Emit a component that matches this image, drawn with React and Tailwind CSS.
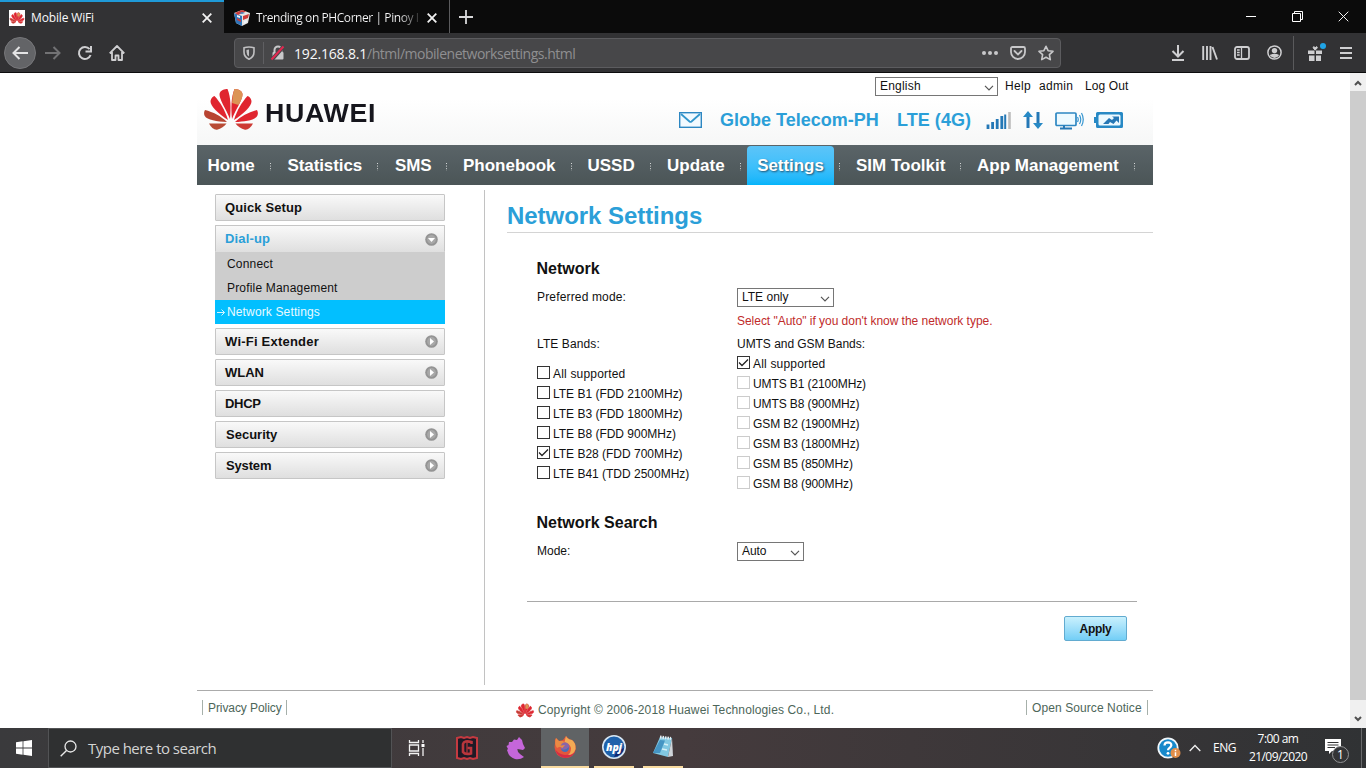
import React from "react";

const ARIAL = "font-['Liberation_Sans',Arial,sans-serif]";
const SEGOE = "font-['Open_Sans','Noto_Sans',sans-serif]";

function Svg({ w, h, children, className = "" }) {
  return (
    <svg width={w} height={h} viewBox={`0 0 ${w} ${h}`} fill="none" className={`block shrink-0 ${className}`}>
      {children}
    </svg>
  );
}

function Petals({ w, h, bold, className = "" }) {
  return (
    <svg width={w} height={h} viewBox="0 0 54 41" className={`block shrink-0 overflow-visible ${className}`}>
      <g fill="#e0252f" stroke={bold ? "#dc2f36" : "none"} strokeWidth={bold ? 2.5 : 0}>
        <path d="M26 30C22 20 15 10 15.500 5C16 1 21 0 23.500 0C27 8 27 20 26 30Z" />
        <path d="M24 31C15 25 6 17 6.500 12C7 9 9 7.500 10.500 7C16 13 21 21 24 31Z" />
        <path d="M28 30C32 20 39 10 38.500 5C38 1 33 0 30.500 0C27 8 27 20 28 30Z" />
        <path d="M30 31C39 25 48 17 47.500 12C47 9 45 7.500 43.500 7C38 13 33 21 30 31Z" />
        <path d="M23 33C13 32.500 3 31 .8 27C-.8 24 .8 21.500 1 21C9 23 17 27 23 33Z" fill="#b84431" />
        <path d="M31 33C41 32.500 51 31 53.200 27C54.800 24 53.200 21.500 53 21C45 23 37 27 31 33Z" />
        <path d="M22.500 34.500H5C7 38.500 10 41 13 40.700C17 40 20.500 37 22.500 34.500Z" fill="#b84b35" />
        <path d="M31.500 34.500H49C47 38.500 44 41 41 40.700C37 40 33.500 37 31.500 34.500Z" fill="#cd3b35" />
        <path d="M28.100 14C28.500 8 29 4 30.500 0C33 0 38 1 38.500 5C38.700 8 37 12 34.500 16Z" fill="#dc9455" stroke="none" />
      </g>
    </svg>
  );
}

function CloseX({ size = 10, sw = 1.8, color = "#f2f2f2" }) {
  return (
    <Svg w={size} h={size}>
      <path d={`M.7 .7L${size - 0.7} ${size - 0.7}M${size - 0.7} .7L.7 ${size - 0.7}`} stroke={color} strokeWidth={sw} />
    </Svg>
  );
}

function Tabs() {
  return (
    <div className="flex h-[33px] bg-[#0b0b0b] text-[12px] text-[#f9f9fa]">
      <div className="flex w-[224px] items-center border-t-2 border-[#1f9ad8] bg-[#323234] pl-[9px] pr-[12px]">
        <div className="flex size-4 items-center justify-center bg-white">
          <Petals w={14} h={12} bold />
        </div>
        <span className="ml-[6px] flex-1 tracking-[-0.15px]">Mobile WiFi</span>
        <CloseX />
      </div>
      <div className="flex w-[226px] items-center border-r border-[#5b5b5d] pl-[10px] pr-[12px] pt-[2px]">
        <Svg w={16} h={16}>
          <path d="M8 0L16 3L14 13L8 16L2 13L0 3Z" fill="#e8e4e2" />
          <path d="M0 3L8 6V16L2 13Z" fill="#2e75ba" />
          <path d="M1 3L8 0L12 1.500L4 5ZM9 6L15 4L14 8L9 10ZM3 8L7 10V12L3 10Z" fill="#cf3a38" />
          <path d="M3 5L6 6V8L3 7ZM10 11L13 10V12L10 14Z" fill="#eef4fa" />
          <path d="M8 2L11 3L8 4L5 3Z" fill="#4a87c5" />
        </Svg>
        <span className="ml-[6px] whitespace-nowrap bg-gradient-to-r from-[#f9f9fa] from-88% to-[#333] bg-clip-text tracking-[-0.43px] text-transparent">
          Trending on PHCorner | Pinoy I
        </span>
        <span className="ml-auto"><CloseX /></span>
      </div>
      <div className="ml-[9px] flex items-center">
        <Svg w={14} h={14}><path d="M7 0V14M0 7H14" stroke="#d8d8da" strokeWidth="1.800" /></Svg>
      </div>
      <div className="ml-auto flex items-center">
        <div className="flex w-[46px] justify-center"><Svg w={10} h={1}><path d="M0 .5H10" stroke="#fff" /></Svg></div>
        <div className="flex w-[46px] justify-center">
          <Svg w={11} h={11}><path d="M.5 2.500H8.500V10.500H.5ZM2.500 2.500V.5H10.500V8.500H8.500" stroke="#fff" /></Svg>
        </div>
        <div className="flex w-[46px] justify-center"><CloseX size={11} sw={1} /></div>
      </div>
    </div>
  );
}

function Cell({ w, children }) {
  const widths = { 32: "w-[32px]", 28: "w-[28px]" };
  return <div className={`flex ${widths[w]} shrink-0 items-center justify-center`}>{children}</div>;
}

function Toolbar() {
  return (
    <div className="flex h-[40px] items-center border-b border-[#0c0c0d] bg-[#323234]">
      <div className="flex w-[234px] items-center pl-1">
        <div className="mr-px flex size-8 items-center justify-center rounded-full border border-[#77777a] bg-[#636467]">
          <Svg w={16} h={14}><path d="M16 7H1.500M7.500 1L1.500 7L7.500 13" stroke="#e4e4e5" strokeWidth="2" /></Svg>
        </div>
        <Cell w={32}><Svg w={16} h={14}><path d="M0 7H14.500M8.500 1L14.500 7L8.500 13" stroke="#727274" strokeWidth="2" /></Svg></Cell>
        <Cell w={32}>
          <Svg w={16} h={16}>
            <path d="M12.600 4.200A6 6 0 1 0 13.600 10" stroke="#cfcfd1" strokeWidth="2" />
            <path d="M14 1V6.500H8.500" stroke="#cfcfd1" strokeWidth="2" />
          </Svg>
        </Cell>
        <Cell w={32}>
          <Svg w={16} h={16}>
            <path d="M.7 8.300L8 1L15.300 8.300M3 7V15H6.500V10.500H9.500V15H13V7" stroke="#cfcfd1" strokeWidth="1.800" strokeLinejoin="round" />
          </Svg>
        </Cell>
      </div>
      <div className="flex h-[30px] w-[827px] items-center rounded-sm border border-[#5c5c5f] bg-[#474749] pl-[8px]">
        <Svg w={12} h={14}>
          <path d="M1 1.800Q6 .2 11 1.800V6Q11 11 6 13.200Q1 11 1 6Z" stroke="#c0c0c2" strokeWidth="1.600" />
          <path d="M6 3.500V10.500Q3.500 9 3.500 6V4Z" fill="#c0c0c2" />
        </Svg>
        <div className="ml-[8px] h-[22px] w-px bg-[#5f5f62]" />
        <Svg w={16} h={16} className="ml-[6px]">
          <path d="M4.500 7V5A3.500 3.500 0 0 1 11.500 5V7" stroke="#c8c8ca" strokeWidth="2" />
          <rect x="2.500" y="7" width="11" height="7.500" rx="1" fill="#c8c8ca" />
          <path d="M2 14.500L14 1" stroke="#474749" strokeWidth="4" />
          <path d="M1.500 14.500L13.500 1.500" stroke="#e22850" strokeWidth="2" />
        </Svg>
        <span className="ml-[8px] mt-[2px] whitespace-nowrap text-[14px] leading-5 tracking-[-0.18px] text-[#f9f9fa]">
          192.168.8.1<span className="tracking-[-0.48px] text-[#8f8f91]">/html/mobilenetworksettings.html</span>
        </span>
        <div className="ml-auto flex">
          <Cell w={28}>
            <Svg w={16} h={4}><g fill="#c8c8ca"><circle cx="2" cy="2" r="2" /><circle cx="8" cy="2" r="2" /><circle cx="14" cy="2" r="2" /></g></Svg>
          </Cell>
          <Cell w={28}>
            <Svg w={16} h={14}>
              <path d="M2.500 1H13.500Q15 1 15 2.500V6A7 7 0 0 1 1 6V2.500Q1 1 2.500 1Z" stroke="#c8c8ca" strokeWidth="1.800" />
              <path d="M4.500 5L8 8.500L11.500 5" stroke="#c8c8ca" strokeWidth="1.800" strokeLinecap="round" />
            </Svg>
          </Cell>
          <Cell w={28}>
            <Svg w={16} h={16}>
              <path d="M8 1.300L10.100 5.700L15 6.300L11.400 9.700L12.300 14.600L8 12.200L3.700 14.600L4.600 9.700L1 6.300L5.900 5.700Z" stroke="#c8c8ca" strokeWidth="1.600" strokeLinejoin="round" />
            </Svg>
          </Cell>
        </div>
      </div>
      <div className="ml-auto flex items-center">
        <Cell w={32}>
          <Svg w={14} h={16}><path d="M7 0V11M1.500 6L7 11.500L12.500 6M1 15H13" stroke="#cfcfd1" strokeWidth="2" /></Svg>
        </Cell>
        <Cell w={32}>
          <Svg w={16} h={14}><path d="M1.200 0V14M5 0V14M8.500 0V14M10.500 1L15 13.500" stroke="#cfcfd1" strokeWidth="1.900" /></Svg>
        </Cell>
        <Cell w={32}>
          <Svg w={16} h={14}>
            <rect x="1" y="1" width="14" height="12" rx="2" stroke="#cfcfd1" strokeWidth="1.800" />
            <path d="M7.500 1V13M3 4H5.700M3 6.500H5.700M3 9H5.700" stroke="#cfcfd1" strokeWidth="1.300" />
          </Svg>
        </Cell>
        <Cell w={32}>
          <Svg w={15} h={15}>
            <circle cx="7.500" cy="7.500" r="6.600" stroke="#cfcfd1" strokeWidth="1.500" />
            <circle cx="7.500" cy="5.600" r="2.700" fill="#cfcfd1" />
            <path d="M2.800 10Q7.500 7.500 12.200 10Q10.500 13 7.500 13Q4.500 13 2.800 10Z" fill="#cfcfd1" />
          </Svg>
        </Cell>
        <div className="ml-[3px] h-[34px] w-px bg-[#5a5a5c]" />
        <div className="ml-[14px] flex w-[20px]">
          <Svg w={19} h={20}>
            <path d="M0 7.500H6.500V11H0ZM8 7.500H14V11H8ZM1 12.500H6.500V18H1ZM8 12.500H13V18H8Z" fill="#cfcfd1" />
            <path d="M7.200 7C4.500 5 5 3.500 6.200 3.700L7.200 5L8.300 3.700C9.500 3.500 10 5 7.200 7Z" fill="#cfcfd1" stroke="#cfcfd1" />
            <circle cx="15" cy="3" r="3" fill="#1fa4e6" />
          </Svg>
        </div>
        <Svg w={12} h={12} className="ml-[12px] mr-[14px]"><path d="M0 1H12M0 6H12M0 11H12" stroke="#cfcfd1" strokeWidth="2" /></Svg>
      </div>
    </div>
  );
}

function Select({ className, children }) {
  return (
    <div className={`flex h-[19px] items-center justify-between border border-[#767676] bg-white pl-1 pr-[3px] text-[12px] leading-[17px] text-[#111] ${className}`}>
      <span className="-mt-px">{children}</span>
      <Svg w={10} h={6} className="mt-[3px]"><path d="M1 .8L5 4.800L9 .8" stroke="#555" strokeWidth="1.200" /></Svg>
    </div>
  );
}

function Header() {
  return (
    <div className="flex h-[72px] justify-between bg-gradient-to-b from-white from-35% to-[#f6f7f7]">
      <div className="flex pl-[7px] pt-[16px]">
        <Petals w={54} h={41} />
        <span className="ml-[7px] mt-[12px] origin-left scale-x-[1.07] text-[25px] font-bold leading-[24px] tracking-[0.65px] text-[#16161d]">HUAWEI</span>
      </div>
      <div className="flex w-[475px] flex-col pt-[4px]">
        <div className="flex h-[19px] items-center pl-[197px] text-[12px] text-[#111]">
          <Select className="w-[123px] tracking-[0.2px]">English</Select>
          <span className="-mt-px ml-[7px] w-[34px] tracking-[0.35px]">Help</span>
          <span className="-mt-px w-[46px] tracking-[0.3px]">admin</span>
          <span className="-mt-px tracking-[0.1px]">Log Out</span>
        </div>
        <div className="mt-[12px] flex h-[24px] items-center pl-px text-[18px] font-bold text-[#2b9fd8]">
          <Svg w={23} h={16}>
            <rect x=".7" y=".7" width="21.600" height="14.600" stroke="#2d87c2" strokeWidth="1.400" fill="#f2faff" />
            <path d="M2 2L10.500 9.500Q11.500 10.300 12.500 9.500L21 2" stroke="#3296cc" strokeWidth="1.800" />
          </Svg>
          <span className="ml-[18px] w-[177px] whitespace-nowrap">Globe Telecom-PH</span>
          <span className="w-[89px] whitespace-nowrap tracking-[0.05px]">LTE (4G)</span>
          <Svg w={25} h={17}>
            <path d="M2 12.500V17M6.600 10V17M11.200 7V17M15.800 4V17" stroke="#2478b6" strokeWidth="2.800" />
            <path d="M19.200 2.500V17" stroke="#2478b6" strokeWidth="2" />
            <path d="M23.500 0V17" stroke="#bdbdbd" strokeWidth="2.600" />
          </Svg>
          <Svg w={20} h={18} className="ml-[12px]">
            <path d="M5 17V4M15 1V14" stroke="#2478b6" strokeWidth="3" />
            <path d="M0 6L5 0L10 6ZM10 12L15 18L20 12Z" fill="#2789c5" />
          </Svg>
          <Svg w={29} h={19} className="ml-[12px]">
            <rect x="1" y="2" width="20" height="12.500" rx="1" stroke="#2d87c2" strokeWidth="1.700" fill="#eefaff" />
            <path d="M9 14.500V17M5 17.500H17" stroke="#2478b6" strokeWidth="2" />
            <path d="M22.500 6Q24 8.500 22.500 11M24.500 4Q27 8.500 24.500 13M26.500 2Q30 8.500 26.500 15" stroke="#3696d0" strokeWidth="1.200" />
          </Svg>
          <Svg w={29} h={16} className="ml-[10px]">
            <path d="M0 5H2V1.500Q2 0 3.500 0H27.500Q29 0 29 1.500V14.500Q29 16 27.500 16H3.500Q2 16 2 14.500V11H0Z" fill="#2789c5" />
            <rect x="4.500" y="2.500" width="22" height="11" rx="1.500" fill="#ecf9ff" />
            <path d="M9 12L15 6L18 8L20 6L18 4.500H25V11L22.500 8.500L19.500 12L16 10L14.500 12Z" fill="#2577b5" />
          </Svg>
        </div>
      </div>
    </div>
  );
}

function Dots() {
  return (
    <Svg w={1} h={9} className="ml-auto mt-px self-center">
      <path d="M.5 1V9" stroke="#d5d8d8" strokeDasharray="1 1.600" />
    </Svg>
  );
}

const NAV = [
  ["Home", "w-[74px] pl-[10.500px]"],
  ["Statistics", "w-[107px] pl-[16.500px] tracking-[-0.1px]"],
  ["SMS", "w-[69px] pl-[17px] tracking-[-0.15px]"],
  ["Phonebook", "w-[125px] pl-[16px]"],
  ["USSD", "w-[79px] pl-[15.500px]"],
  ["Update", "w-[90px] pl-[16px]"],
];

function Nav() {
  return (
    <div className="flex h-[40px] bg-gradient-to-b from-[#5a6468] to-[#4b5557] text-[17px] font-bold text-white">
      {NAV.map(([label, cls]) => (
        <div key={label} className={`flex items-center pt-[2px] ${cls}`}>{label}<Dots /></div>
      ))}
      <div className="ml-[6px] mt-px flex w-[87px] items-center justify-center rounded-t-sm bg-gradient-to-b from-[#5cc4f8] via-[#3fc0fb] via-50% to-[#02b4fa] tracking-[-0.05px] [text-shadow:1px_1px_2px_#24506c]">Settings</div>
      <div className="flex w-[6px] pt-[2px]"><Dots /></div>
      <div className="flex w-[121px] items-center pl-[16px] pt-[2px]"><span>SIM Toolkit</span><Dots /></div>
      <div className="flex w-[174px] items-center whitespace-nowrap pl-[16px] pt-[2px]">App Management<Dots /></div>
    </div>
  );
}

function Bullet({ open }) {
  return (
    <Svg w={13} h={13}>
      <circle cx="6.500" cy="6.500" r="6.300" fill="#949494" />
      <circle cx="6.500" cy="6.500" r="4.400" fill="#a8a8a8" />
      <path d={open ? "M3 5H10L6.500 9Z" : "M5 3V10L9 6.500Z"} fill="#fff" />
    </Svg>
  );
}

function MenuItem({ label, arrow, open, className = "" }) {
  return (
    <div className={`flex h-[27px] items-center justify-between rounded-[1px] border border-[#c6c6c6] bg-gradient-to-b from-[#f9f9f9] to-[#dfdfdf] pl-[9px] pr-[6px] text-[13px] font-bold ${open ? "border-b-0 text-[#2b9fd8]" : "text-[#111]"} ${className}`}>
      <span>{label}</span>
      {arrow && <Bullet open={open} />}
    </div>
  );
}

function Sidebar() {
  return (
    <div className="flex w-[230px] flex-col pt-[9px]">
      <MenuItem label="Quick Setup" className="tracking-[0.12px]" />
      <MenuItem label="Dial-up" arrow open className="mt-[4px] tracking-[0.15px]" />
      <div className="h-[48px] bg-[#cdcdcd] pl-[12px] text-[12px] leading-[24px] tracking-[0.18px] text-[#111]">
        <div>Connect</div>
        <div>Profile Management</div>
      </div>
      <div className="flex h-[24px] items-center bg-[#02bfff] pl-[2px] text-[12px] tracking-[0.14px] text-[#eafaff]">
        <Svg w={8} h={7} className="mr-[2px]"><path d="M0 3.500H7.500M4.500 .5L7.500 3.500L4.500 6.500" stroke="#d5f5ff" /></Svg>
        Network Settings
      </div>
      <div className="flex flex-col gap-[4px] pt-[4px]">
        <MenuItem label="Wi-Fi Extender" arrow className="tracking-[0.22px]" />
        <MenuItem label="WLAN" arrow />
        <MenuItem label="DHCP" className="tracking-[-0.3px]" />
        <MenuItem label="Security" arrow className="pl-[10px]" />
        <MenuItem label="System" arrow className="pl-[10px] tracking-[-0.15px]" />
      </div>
    </div>
  );
}

function Check({ label, on, off, className = "" }) {
  return (
    <div className="flex h-[20px] items-center">
      <div className={`-mt-px flex size-[13px] items-center justify-center border bg-white ${off ? "border-[#cccccc]" : "border-[#333]"}`}>
        {on && <Svg w={11} h={9}><path d="M1 4.500L4 7.500L10 1.500" stroke="#222" strokeWidth="1.300" /></Svg>}
      </div>
      <span className={`ml-[3px] mt-px ${className}`}>{label}</span>
    </div>
  );
}

const LTE = [
  ["All supported", false, "tracking-[0.18px]"],
  ["LTE B1 (FDD 2100MHz)", false, ""],
  ["LTE B3 (FDD 1800MHz)", false, ""],
  ["LTE B8 (FDD 900MHz)", false, ""],
  ["LTE B28 (FDD 700MHz)", true, ""],
  ["LTE B41 (TDD 2500MHz)", false, ""],
];
const UMTS = ["UMTS B1 (2100MHz)", "UMTS B8 (900MHz)", "GSM B2 (1900MHz)", "GSM B3 (1800MHz)", "GSM B5 (850MHz)", "GSM B8 (900MHz)"];

function Main() {
  return (
    <div className="ml-[22px] flex flex-1 flex-col text-[12px] text-[#111]">
      <h1 className="h-[48px] border-b border-[#d4d4d4] pt-[15px] text-[24px] font-bold leading-[32px] tracking-[-0.05px] text-[#2b9fd8]">Network Settings</h1>
      <div className="ml-[30px]">
        <h2 className="-ml-[0.5px] mt-[24px] text-[16px] font-bold leading-[24px]">Network</h2>
        <div className="mt-[7px] flex h-[19px]">
          <span className="w-[200px] leading-[18px] tracking-[0.16px]">Preferred mode:</span>
          <Select className="w-[97px]">LTE only</Select>
        </div>
        <div className="ml-[200px] mt-[4px] leading-[20px] tracking-[-0.03px] text-[#bf2b2b]">Select "Auto" if you don't know the network type.</div>
        <div className="mt-[3px] flex">
          <div className="w-[200px]">
            <div className="mb-[9px] leading-[20px] tracking-[0.1px]">LTE Bands:</div>
            {LTE.map(([l, on, cls]) => <Check key={l} label={l} on={on} className={cls || "tracking-[-0.01px]"} />)}
          </div>
          <div>
            <div className="leading-[20px] tracking-[-0.04px]">UMTS and GSM Bands:</div>
            <div className="-mt-px">
              <Check label="All supported" on className="tracking-[0.18px]" />
              {UMTS.map((l) => <Check key={l} label={l} off className="tracking-[-0.1px]" />)}
            </div>
          </div>
        </div>
        <h2 className="-ml-[0.5px] mt-[18px] text-[16px] font-bold leading-[24px]">Network Search</h2>
        <div className="mt-[7px] flex h-[19px]">
          <span className="w-[200px] leading-[18px]">Mode:</span>
          <Select className="w-[67px] tracking-[-0.1px]">Auto</Select>
        </div>
      </div>
      <div className="ml-[20px] mr-[16px] mt-[40px] flex justify-end border-t border-[#a9a9a9] pr-[10px] pt-[14px]">
        <button className="h-[25px] w-[63px] rounded-[2px] border border-[#62abd0] bg-gradient-to-b from-[#c9f1fd] to-[#72cef6] text-[12px] font-bold tracking-[-0.3px]">Apply</button>
      </div>
    </div>
  );
}

function Footer() {
  return (
    <div className="mt-[5px] flex h-[38px] border-t border-[#ababab] px-[5px] pt-[9px] text-[12px] text-[#4d6659]">
      <div className="w-[314px]">
        <div className="h-[15px] w-[85px] whitespace-nowrap border-x border-[#a6b0aa] pl-[5px] leading-[17px] tracking-[-0.08px]">Privacy Policy</div>
      </div>
      <div className="flex h-[20px] items-center whitespace-nowrap tracking-[0.13px]">
        <Petals w={18} h={13} bold className="mr-[4px]" />Copyright © 2006-2018 Huawei Technologies Co., Ltd.
      </div>
      <div className="ml-auto h-[15px] w-[122px] whitespace-nowrap border-x border-[#a6b0aa] pl-[5px] leading-[17px] tracking-[0.09px]">Open Source Notice</div>
    </div>
  );
}

function Page() {
  return (
    <div className={`flex h-[655px] bg-white ${ARIAL}`}>
      <div className="ml-[197px] w-[956px]">
        <Header />
        <Nav />
        <div className="flex h-[500px] pl-[18px]">
          <Sidebar />
          <div className="ml-[39px] mt-[5px] w-px bg-[#c2c2c2]" />
          <Main />
        </div>
        <Footer />
      </div>
      <div className="ml-auto flex w-[16px] flex-col items-center justify-between bg-[#f0f0f0] py-[6px]">
        <Svg w={8} h={6} className="mt-px"><path d="M1 5L4 2L7 5" stroke="#505050" strokeWidth="2" /></Svg>
        <div className="mb-[16px] mt-[5px] w-full flex-1 bg-[#cdcdcd]" />
        <Svg w={8} h={6}><path d="M1 1L4 4L7 1" stroke="#505050" strokeWidth="2" /></Svg>
      </div>
    </div>
  );
}

function TaskIcon({ children, className = "" }) {
  return <div className={`flex h-[40px] items-center justify-center ${className}`}>{children}</div>;
}

function Taskbar() {
  return (
    <div className="flex h-[40px] bg-gradient-to-r from-[#3a3a3c] via-[#453b3d] via-50% to-[#303234] text-white">
      <TaskIcon className="w-[48px]">
        <Svg w={16} h={16}><path d="M0 2.200L6.600 1.300V7.600H0ZM7.400 1.200L16 0V7.600H7.400ZM0 8.400H6.600V14.700L0 13.800ZM7.400 8.400H16V16L7.400 14.800Z" fill="#fff" /></Svg>
      </TaskIcon>
      <div className="flex w-[344px] items-center border border-[#525355] bg-[#2f3031] pl-[11px]">
        <Svg w={17} h={17}><circle cx="10.500" cy="6.500" r="5.500" stroke="#e8e8e8" strokeWidth="1.300" /><path d="M6.500 10.500L.7 16.300" stroke="#e8e8e8" strokeWidth="1.400" /></Svg>
        <span className="ml-[11px] text-[15px] tracking-[-0.52px] text-[#d4d4d4]">Type here to search</span>
      </div>
      <TaskIcon className="w-[48px]">
        <Svg w={17} h={16}>
          <path d="M1.500 0V2.500H10.500V0M1.500 16V13.500H10.500V16M1.500 5H10.500V11H1.500ZM15 0V3M15 8V16" stroke="#f2f2f2" strokeWidth="1.300" />
          <path d="M13.500 4H16.500V7H13.500Z" fill="#fff" />
        </Svg>
      </TaskIcon>
      <TaskIcon className="ml-[3px] w-[48px]">
        <Svg w={22} h={24}>
          <path d="M1 2L5 1L8 2L11 1L14 2L17 1L21 2V22L17 23L14 22L11 23L8 22L5 23L1 22Z" fill="#1e1a26" stroke="#c53a40" strokeWidth="2" />
          <path d="M15.500 8V6Q8 4 7 8V16Q9 19 15 17.500V12H11.500" stroke="#b9363c" strokeWidth="2.600" />
          <path d="M11 5V18" stroke="#b9363c" strokeWidth="1.200" />
        </Svg>
      </TaskIcon>
      <TaskIcon className="w-[50px]">
        <Svg w={20} h={24}>
          <path d="M13 1L16 4L17 8L19 12L17 14L11.500 13Q11 16 14 18L18 21Q14 24 9 23Q4 21 2.500 18L1 14L2 13L.5 10L2.500 9L3 6L6 6L8 3.500L11 4Z" fill="#c566da" />
        </Svg>
      </TaskIcon>
      <TaskIcon className="w-[48px] border-b-2 border-[#f9dba0] bg-[#606365]">
        <Svg w={24} h={24}>
          <path d="M2 8Q1 5 3 3L6 6L10 5L13 1Q15 4 19 5Q23 8 22.800 14Q21 23 12 23Q2 22 1.500 12Z" fill="#e2583c" />
          <path d="M2 14Q4 22 12 23Q21 22 22.500 15Q19 20 12 20Q5 19 2 14Z" fill="#d72d45" />
          <path d="M13 1Q14 4 19 5Q23 8 22.500 14Q21 20 15 20Q18 18 18 13Q17 9 11.500 7Z" fill="#f2aa54" />
          <path d="M3 3L6 6L10 6L12 8L8 11L4 13Q1 9 3 3Z" fill="#e98a44" />
          <circle cx="12" cy="12" r="4.500" fill="#8965a8" />
          <path d="M5 11L12 10L9.500 13Z" fill="#ec8b42" />
          <path d="M8 14Q12 16 16 12Q16 17 12 17Q9 17 8 14Z" fill="#496fb5" />
        </Svg>
      </TaskIcon>
      <TaskIcon className="ml-[5px] w-[40px] border-b-2 border-[#f9dba0]">
        <Svg w={24} h={24}>
          <circle cx="12" cy="12" r="11.200" fill="#1e61ab" stroke="#d7e6f3" strokeWidth="1.600" />
          <path d="M12 22Q20 21 22 13L15 16Z" fill="#10236e" />
          <text x="12" y="16" textAnchor="middle" fontSize="10.500" fontWeight="800" fontStyle="italic" fill="#fff" textLength="16">hpj</text>
        </Svg>
      </TaskIcon>
      <TaskIcon className="ml-[9px] w-[40px] border-b-2 border-[#f9dba0]">
        <Svg w={22} h={24}>
          <path d="M8 2L20 3L16 22L1 18Z" fill="#82c8e2" />
          <path d="M8 5L13 5.500L8 18L1 18Z" fill="#4595c4" />
          <path d="M20 3L21 21L16 22Z" fill="#cfd5da" />
          <path d="M8 2L19 3.500" stroke="#e7eef2" strokeWidth="3" strokeDasharray="1.500 1" />
          <path d="M12 9L16 10M10 14L15 15" stroke="#d5f0f8" strokeWidth="1.500" />
        </Svg>
      </TaskIcon>
      <div className="ml-auto flex h-[40px] items-center">
        <Svg w={24} h={22}>
          <circle cx="11" cy="11" r="9.700" fill="#1689cb" stroke="#f1f7fb" strokeWidth="1.800" />
          <path d="M7.500 8.500Q7.500 5.300 11 5.300Q14.500 5.500 14.300 8.500Q14 10 12 11.300Q11 12 11 13.300" stroke="#fff" strokeWidth="2.200" />
          <circle cx="11" cy="16.300" r="1.400" fill="#fff" />
          <circle cx="18.500" cy="16" r="5" fill="#e08e4a" />
          <path d="M18.500 12.800V14.200M18.500 15.200V19" stroke="#fff" strokeWidth="1.500" />
        </Svg>
        <Svg w={12} h={8} className="ml-[8px]"><path d="M.7 7L6 1.500L11.300 7" stroke="#f0f0f0" strokeWidth="1.300" /></Svg>
        <span className="ml-[12px] w-[23px] text-[12px] tracking-[-0.5px]">ENG</span>
        <div className="ml-[12px] w-[60px] whitespace-nowrap text-center text-[12px] leading-[18px] tracking-[-0.55px]">
          <div>7:00 am</div>
          <div>21/09/2020</div>
        </div>
        <Svg w={25} h={26} className="ml-[17px] mt-[6px]">
          <path d="M0 1H16V13H7L4 16V13H0Z" fill="#fff" />
          <path d="M2.500 4.500H13.500M2.500 7H13.500M2.500 9.500H10" stroke="#333" />
          <circle cx="15.500" cy="16.500" r="8" fill="#333436" stroke="#929395" />
          <text x="15.500" y="21" textAnchor="middle" fontSize="12" fill="#fff">1</text>
        </Svg>
        <div className="ml-[11px] mr-[4px] h-[40px] w-px bg-[#68696b]" />
      </div>
    </div>
  );
}

export default function App() {
  return (
    <div className={`h-[768px] w-[1366px] overflow-hidden ${SEGOE}`}>
      <Tabs />
      <Toolbar />
      <Page />
      <Taskbar />
    </div>
  );
}
